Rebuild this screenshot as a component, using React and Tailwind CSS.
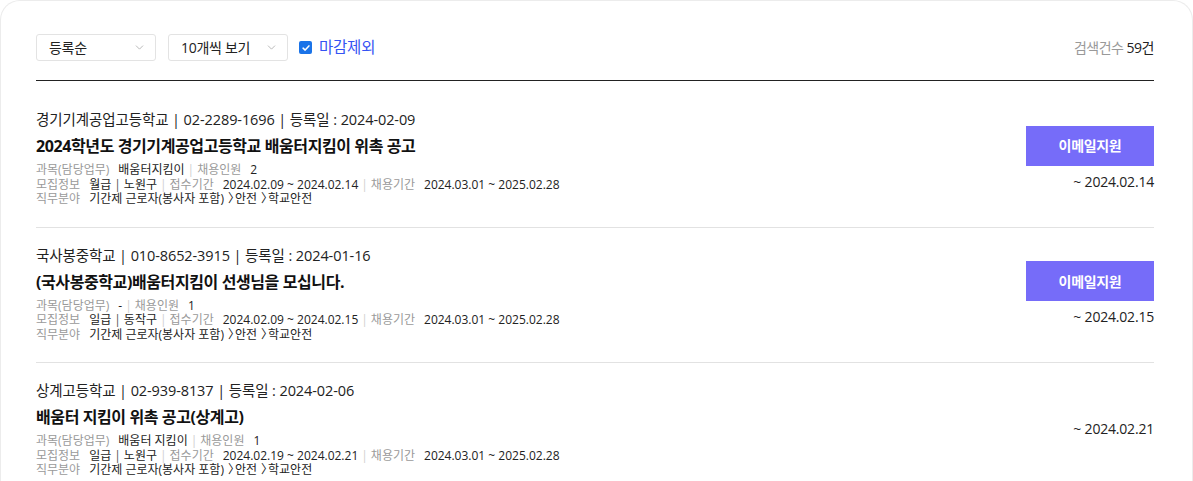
import { ChevronDown } from 'lucide-react'

const JOBS = [
  {
    school: '경기기계공업고등학교',
    tel: '02-2289-1696',
    regDate: '2024-02-09',
    title: '2024학년도 경기기계공업고등학교 배움터지킴이 위촉 공고',
    subject: '배움터지킴이',
    count: '2',
    pay: '월급',
    area: '노원구',
    receipt: '2024.02.09 ~ 2024.02.14',
    hire: '2024.03.01 ~ 2025.02.28',
    email: true,
    deadline: '~ 2024.02.14',
  },
  {
    school: '국사봉중학교',
    tel: '010-8652-3915',
    regDate: '2024-01-16',
    title: '(국사봉중학교)배움터지킴이 선생님을 모십니다.',
    subject: '-',
    count: '1',
    pay: '일급',
    area: '동작구',
    receipt: '2024.02.09 ~ 2024.02.15',
    hire: '2024.03.01 ~ 2025.02.28',
    email: true,
    deadline: '~ 2024.02.15',
  },
  {
    school: '상계고등학교',
    tel: '02-939-8137',
    regDate: '2024-02-06',
    title: '배움터 지킴이 위촉 공고(상계고)',
    subject: '배움터 지킴이',
    count: '1',
    pay: '일급',
    area: '노원구',
    receipt: '2024.02.19 ~ 2024.02.21',
    hire: '2024.03.01 ~ 2025.02.28',
    email: false,
    deadline: '~ 2024.02.21',
  },
]

const font = { fontFamily: '"Open Sans", "Noto Sans CJK KR", sans-serif' }

function Bar({ dark }) {
  return <span className={`mx-[3px] ${dark ? 'text-[#555]' : 'text-[#cfcfcf]'}`}>|</span>
}

function Label({ children }) {
  return <span className="mr-[9px] text-[#9a9a9a]">{children}</span>
}

function Arrow() {
  return <span className="ml-[4px] mr-[-4px] inline-block w-[11px]">〉</span>
}

function Select({ label }) {
  return (
    <div className="flex h-[27px] w-[120px] items-center justify-between rounded-[3px] border border-[#e3e3e3] pl-[12px] pr-[9px] text-[14px] tracking-[-0.3px] text-[#222]">
      <span>{label}</span>
      <ChevronDown className="h-[13px] w-[13px] text-[#aaa]" strokeWidth={1.5} />
    </div>
  )
}

function JobRow({ job }) {
  return (
    <div className="flex items-center justify-between border-b border-[#e2e2e2] pt-[18px] pb-[20px]">
      <div>
        <p className="text-[14.5px] leading-[20px] tracking-[-0.1px] text-[#222]">
          {job.school} | {job.tel} | 등록일 : {job.regDate}
        </p>
        <h3 className="mt-[5px] text-[16px] font-bold leading-[22px] tracking-[-0.4px] text-[#111]">{job.title}</h3>
        <div className="mt-[6px] text-[12px] leading-[14.5px] text-[#222]">
          <p>
            <Label>과목(담당업무)</Label>
            {job.subject}
            <Bar />
            <Label>채용인원</Label>
            {job.count}
          </p>
          <p>
            <Label>모집정보</Label>
            {job.pay}
            <Bar dark />
            {job.area}
            <Bar />
            <Label>접수기간</Label>
            {job.receipt}
            <Bar />
            <Label>채용기간</Label>
            {job.hire}
          </p>
          <p>
            <Label>직무분야</Label>
            기간제 근로자(봉사자 포함)<Arrow />안전<Arrow />학교안전
          </p>
        </div>
      </div>
      <div className="flex flex-col items-end">
        {job.email && (
          <button className="mb-[7px] flex h-[40px] w-[128px] items-center justify-center bg-[#766cf9] text-[14px] font-bold tracking-[-0.3px] text-white">
            이메일지원
          </button>
        )}
        <span className="text-[14px] leading-[18px] tracking-[-0.2px] text-[#222]">{job.deadline}</span>
      </div>
    </div>
  )
}

export default function App() {
  return (
    <div className="min-h-[481px] bg-white" style={font}>
      <div className="min-h-[481px] rounded-t-[20px] border border-b-0 border-[#ececec] pt-[33px] pl-[35px] pr-[38px]">
        <div className="flex items-center justify-between border-b border-[#222] pb-[19px]">
          <div className="flex items-center">
            <Select label="등록순" />
            <div className="w-[12px]" />
            <Select label="10개씩 보기" />
            <label className="ml-[11px] flex items-center">
              <span className="flex h-[13px] w-[13px] items-center justify-center rounded-[2px] bg-[#1a73e8]">
                <svg viewBox="0 0 12 12" className="h-[10px] w-[10px]">
                  <path d="M2.5 6.2 L5 8.5 L9.5 3.5" fill="none" stroke="white" strokeWidth="1.8" strokeLinecap="round" strokeLinejoin="round" />
                </svg>
              </span>
              <span className="ml-[7px] text-[15.5px] tracking-[-0.2px] text-[#3553f3]">마감제외</span>
            </label>
          </div>
          <p className="text-[14px] tracking-[-0.5px] text-[#999]">
            검색건수 <span className="text-[#222]">59건</span>
          </p>
        </div>
        <div className="mt-[11px]">
          {JOBS.map(job => (
            <JobRow key={job.school} job={job} />
          ))}
        </div>
      </div>
    </div>
  )
}
